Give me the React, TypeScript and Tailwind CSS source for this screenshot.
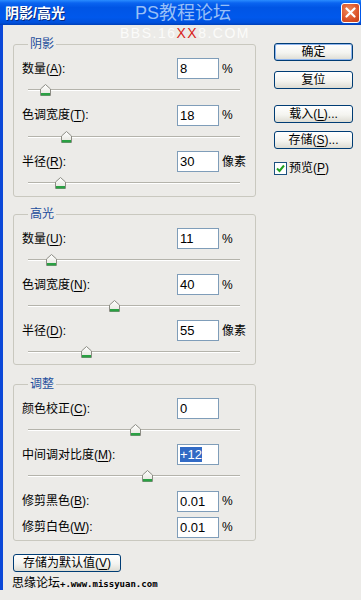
import type { ReactNode } from 'react'

const FONT = "font-['Liberation_Sans','Noto_Sans_CJK_SC',sans-serif]"

type Row = {
	name: string
	hot: string
	value: string
	unit: string
	thumb?: number // thumb centre, page x
	selected?: boolean
}

const shadows: Row[] = [
	{ name: '数量', hot: 'A', value: '8', unit: '%', thumb: 45.5 },
	{ name: '色调宽度', hot: 'T', value: '18', unit: '%', thumb: 66.5 },
	{ name: '半径', hot: 'R', value: '30', unit: '像素', thumb: 60 },
]

const highlights: Row[] = [
	{ name: '数量', hot: 'U', value: '11', unit: '%', thumb: 51.5 },
	{ name: '色调宽度', hot: 'N', value: '40', unit: '%', thumb: 114 },
	{ name: '半径', hot: 'D', value: '55', unit: '像素', thumb: 86.5 },
]

function Label({ name, hot }: { name: string; hot: string }) {
	return (
		<span className="w-[155px] shrink-0 text-[12px] leading-[14px] text-black">
			{name}(<span className="underline underline-offset-[2px]">{hot}</span>):
		</span>
	)
}

function Field({ row }: { row: Row }) {
	return (
		<div className="flex h-[21px] items-center pl-[8px]">
			<Label name={row.name} hot={row.hot} />
			<div className="flex h-[21px] w-[42px] items-center border border-[#7f9db9] bg-white pl-[2px] text-[13px] leading-[15px] text-black">
				{row.selected ? <span className="bg-[#316ac5] text-white">{row.value}</span> : row.value}
			</div>
			<span className="ml-[3px] text-[12px] leading-[14px] text-black">{row.unit}</span>
		</div>
	)
}

function Thumb() {
	return (
		<svg width="11" height="12" viewBox="0 0 11 12">
			<defs>
				<linearGradient id="tg" x1="0" y1="0" x2="0" y2="1">
					<stop offset="0" stopColor="#ffffff" />
					<stop offset="1" stopColor="#e4e4dc" />
				</linearGradient>
			</defs>
			<path d="M5.5 0.5 L10.5 5 L10.5 11.5 L0.5 11.5 L0.5 5 Z" fill="url(#tg)" stroke="#8c8c84" />
			<rect x="1" y="9" width="9" height="2.5" fill="#2aa043" />
		</svg>
	)
}

function Slider({ x }: { x: number }) {
	return (
		<div className="relative ml-[14px] h-[22px] w-[212px]">
			<div className="absolute left-0 right-0 top-[10px] h-[2px] border-t border-b border-t-[#b4b3ab] border-b-white" />
			<div className="absolute top-[5px] h-[12px]" style={{ left: x - 28 - 5.5 }}>
				<Thumb />
			</div>
		</div>
	)
}

function Group({ title, className, children }: { title: string; className: string; children: ReactNode }) {
	return (
		<div className={`relative ml-[10px] w-[243px] rounded-[3px] border border-[#c9c8bf] pt-[13px] ${className}`}>
			<span className="absolute -top-[8px] left-[14px] bg-[#ecebe8] px-[2px] text-[12px] leading-[14px] text-[#1c4d9c]">
				{title}
			</span>
			{children}
		</div>
	)
}

function XpButton({ children, primary, className = '' }: { children: ReactNode; primary?: boolean; className?: string }) {
	return (
		<div
			className={`flex h-[18px] items-center justify-center rounded-[3px] border border-[#003c74] bg-[linear-gradient(to_bottom,#ffffff,#f4f4f0_55%,#dddcd3)] text-[12px] leading-[14px] text-black ${
				primary ? 'shadow-[inset_0_0_0_1px_#8fb5ee]' : ''
			} ${className}`}
		>
			{children}
		</div>
	)
}

export default function App() {
	return (
		<div className={`relative h-[600px] w-[361px] overflow-hidden bg-[#ecebe8] ${FONT}`}>
			{/* title bar */}
			<div className="relative flex h-[25px] items-center bg-[linear-gradient(to_bottom,#2a8cff_0%,#0a64f0_12%,#0055e5_30%,#0058ec_70%,#0050dc_90%,#0040b8_100%)]">
				<span className="pl-[5px] text-[14px] font-bold leading-[16px] text-white [text-shadow:1px_1px_0_#0a2a80]">
					阴影/高光
				</span>
				<span className="absolute left-[135px] top-[3px] text-[18px] leading-[20px] text-[#97bff7]">PS教程论坛</span>
				<div className="ml-auto mr-[1px] flex h-[20px] w-[19px] items-center justify-center rounded-[3px] border border-white bg-[radial-gradient(circle_at_40%_35%,#f08a5c,#dc5329_60%,#c23d18)]">
					<svg width="11" height="11" viewBox="0 0 11 11">
						<path d="M1.5 1.5 L9.5 9.5 M9.5 1.5 L1.5 9.5" stroke="#ffffff" strokeWidth="2.2" strokeLinecap="round" />
					</svg>
				</div>
			</div>

			{/* watermark */}
			<div className="absolute left-[120px] top-[26px] font-['Liberation_Sans',sans-serif] text-[14px] leading-[14px] tracking-[1.5px] text-[#fbfbfa]">
				BBS.16<span className="text-[#d8231c]">XX</span>8.COM
			</div>

			{/* body */}
			<div className="flex h-[565px] border-l-[3px] border-[#0b48d8]">
				<div className="flex w-[253px] flex-col">
					<Group title="阴影" className="mt-[19px] h-[153px]">
						{shadows.map((r) => (
							<div key={r.hot} className="mb-[3.5px]">
								<Field row={r} />
								<Slider x={r.thumb ?? 0} />
							</div>
						))}
					</Group>

					<Group title="高光" className="mt-[17px] h-[151px]">
						{highlights.map((r) => (
							<div key={r.hot} className="mb-[3px]">
								<Field row={r} />
								<Slider x={r.thumb ?? 0} />
							</div>
						))}
					</Group>

					<Group title="调整" className="mt-[19px] h-[161px]">
						<Field row={{ name: '颜色校正', hot: 'C', value: '0', unit: '' }} />
						<Slider x={135} />
						<div className="mt-[3px]">
							<Field row={{ name: '中间调对比度', hot: 'M', value: '+12', unit: '', selected: true }} />
							<Slider x={147} />
						</div>
						<div className="mt-[3.5px]">
							<Field row={{ name: '修剪黑色', hot: 'B', value: '0.01', unit: '%' }} />
						</div>
						<div className="mt-[5px]">
							<Field row={{ name: '修剪白色', hot: 'W', value: '0.01', unit: '%' }} />
						</div>
					</Group>

					<XpButton className="ml-[10px] mt-[13px] w-[108px]">
						存储为默认值(<span className="underline underline-offset-[2px]">V</span>)
					</XpButton>

					<div className="ml-[9px] mt-[4px] flex items-end">
						<span className="text-[12px] leading-[14px] text-black">思缘论坛</span>
						<span className="mb-[1px] font-['DejaVu_Sans_Mono',monospace] text-[9px] font-bold leading-[10px] text-black">
							+.www.missyuan.com
						</span>
					</div>
				</div>

				<div className="ml-[18px] flex w-[79px] flex-col pt-[18px]">
					<XpButton primary>确定</XpButton>
					<XpButton className="mt-[10px]">复位</XpButton>
					<XpButton className="mt-[16px]">
						载入(<span className="underline underline-offset-[2px]">L</span>)...
					</XpButton>
					<XpButton className="mt-[8px]">
						存储(<span className="underline underline-offset-[2px]">S</span>)...
					</XpButton>
					<div className="mt-[12px] flex items-center">
						<div className="flex h-[13px] w-[13px] items-center justify-center border border-[#1c5180] bg-white">
							<svg width="9" height="9" viewBox="0 0 9 9">
								<path d="M1 4.5 L3.5 7 L8 1.5" fill="none" stroke="#21a121" strokeWidth="2" />
							</svg>
						</div>
						<span className="ml-[2px] text-[12px] leading-[14px] text-black">
							预览(<span className="underline underline-offset-[2px]">P</span>)
						</span>
					</div>
				</div>
			</div>
		</div>
	)
}
